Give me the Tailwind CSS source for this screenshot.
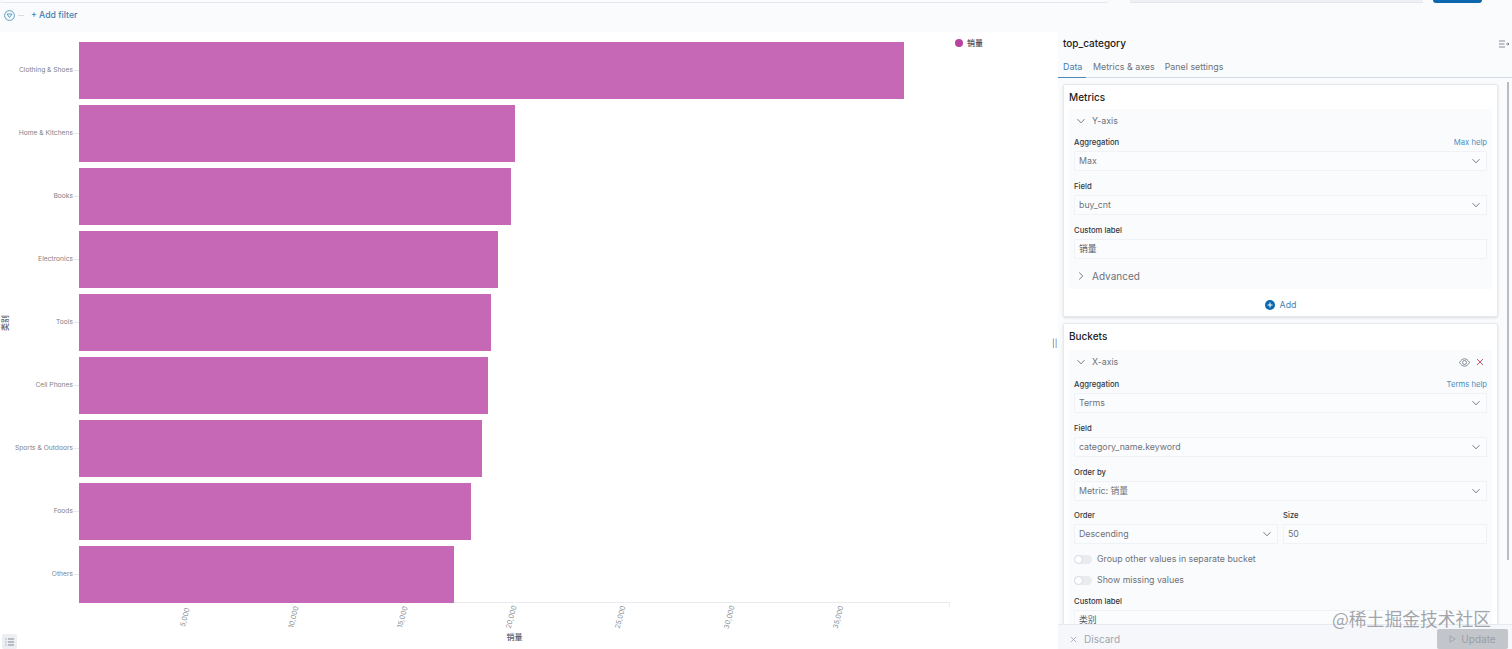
<!DOCTYPE html>
<html lang="en">
<head>
  <meta charset="UTF-8" />
  <title>top_category</title>
  <script src="https://cdn.jsdelivr.net/npm/@tailwindcss/browser@4"></script>
</head>
<body class="bg-white text-[#343741] font-['Inter','Noto_Sans_CJK_SC',sans-serif]">
<div class="relative w-[1512px] h-[649px] overflow-hidden flex flex-col">

  <!-- query bar -->
  <header class="h-[32px] shrink-0 bg-[#fafbfd]">
    <div class="flex h-[3px]">
      <div class="w-[1108px] border-b border-[#e3e6ec] rounded-b-sm"></div>
      <div class="w-[22px]"></div>
      <div class="w-[293px] bg-[#eef0f4] border-b border-[#e3e6ec]"></div>
      <div class="w-[10px]"></div>
      <div class="w-[49px] bg-[#0b68ae] rounded-b-sm"></div>
    </div>
    <div class="flex items-center h-[24px] pl-[4px]">
      <svg class="w-[11px] h-[11px]" viewBox="0 0 11 11" fill="none" stroke="#4d93bf" stroke-width="0.9"><circle cx="5.5" cy="5.5" r="4.9"/><path d="M3 4h5L5.5 7.6z"/></svg>
      <div class="w-[6px] h-px bg-[#d8dce3] ml-[3px]"></div>
      <span class="ml-[7px] mt-[1px] text-[8.7px] font-medium text-[#3f7fae]">+ Add filter</span>
    </div>
  </header>

  <div class="flex flex-1 min-h-0">
    <!-- chart -->
    <main class="w-[1053px] shrink-0 flex">
      <div class="w-[950px] shrink-0 pt-[10px]">
        <div class="flex">
          <div class="w-[10px] flex items-center justify-center">
            <div class="w-0 flex justify-center"><span class="-rotate-90 whitespace-nowrap text-[8px] font-medium text-[#5f6470]">类别</span></div>
          </div>
          <div class="flex-1 flex flex-col gap-[6px] text-[6.7px] text-[#808388]">
            <div class="h-[57px] flex items-center"><span class="w-[63px] text-right whitespace-nowrap">Clothing &amp; Shoes</span><i class="ml-[1px] w-[5px] h-px bg-[#e6e8ec]"></i><div class="h-full bg-[#c768b7]" style="width:825px"></div></div>
            <div class="h-[57px] flex items-center"><span class="w-[63px] text-right whitespace-nowrap">Home &amp; Kitchens</span><i class="ml-[1px] w-[5px] h-px bg-[#e6e8ec]"></i><div class="h-full bg-[#c768b7]" style="width:436px"></div></div>
            <div class="h-[57px] flex items-center"><span class="w-[63px] text-right whitespace-nowrap">Books</span><i class="ml-[1px] w-[5px] h-px bg-[#e6e8ec]"></i><div class="h-full bg-[#c768b7]" style="width:432px"></div></div>
            <div class="h-[57px] flex items-center"><span class="w-[63px] text-right whitespace-nowrap">Electronics</span><i class="ml-[1px] w-[5px] h-px bg-[#e6e8ec]"></i><div class="h-full bg-[#c768b7]" style="width:419px"></div></div>
            <div class="h-[57px] flex items-center"><span class="w-[63px] text-right whitespace-nowrap">Tools</span><i class="ml-[1px] w-[5px] h-px bg-[#e6e8ec]"></i><div class="h-full bg-[#c768b7]" style="width:412px"></div></div>
            <div class="h-[57px] flex items-center"><span class="w-[63px] text-right whitespace-nowrap">Cell Phones</span><i class="ml-[1px] w-[5px] h-px bg-[#e6e8ec]"></i><div class="h-full bg-[#c768b7]" style="width:409px"></div></div>
            <div class="h-[57px] flex items-center"><span class="w-[63px] text-right whitespace-nowrap">Sports &amp; Outdoors</span><i class="ml-[1px] w-[5px] h-px bg-[#e6e8ec]"></i><div class="h-full bg-[#c768b7]" style="width:403px"></div></div>
            <div class="h-[57px] flex items-center"><span class="w-[63px] text-right whitespace-nowrap">Foods</span><i class="ml-[1px] w-[5px] h-px bg-[#e6e8ec]"></i><div class="h-full bg-[#c768b7]" style="width:392px"></div></div>
            <div class="h-[57px] flex items-center"><span class="w-[63px] text-right whitespace-nowrap">Others</span><i class="ml-[1px] w-[5px] h-px bg-[#e6e8ec]"></i><div class="h-full bg-[#c768b7]" style="width:375px"></div></div>
          </div>
        </div>
        <!-- x axis -->
        <div class="ml-[79px] w-[871px] h-[28px] -mt-px border-t border-[#e9ebef] flex text-[7px] text-[#8b9098]">
          <div class="flex-1 flex justify-end"><div class="w-0 mr-[2px] flex justify-center pt-[9px]"><span class="h-fit rotate-[-75deg] whitespace-nowrap">5,000</span></div></div>
          <div class="flex-1 flex justify-end"><div class="w-0 mr-[2px] flex justify-center pt-[9px]"><span class="h-fit rotate-[-75deg] whitespace-nowrap">10,000</span></div></div>
          <div class="flex-1 flex justify-end"><div class="w-0 mr-[2px] flex justify-center pt-[9px]"><span class="h-fit rotate-[-75deg] whitespace-nowrap">15,000</span></div></div>
          <div class="flex-1 flex justify-end"><div class="w-0 mr-[2px] flex justify-center pt-[9px]"><span class="h-fit rotate-[-75deg] whitespace-nowrap">20,000</span></div></div>
          <div class="flex-1 flex justify-end"><div class="w-0 mr-[2px] flex justify-center pt-[9px]"><span class="h-fit rotate-[-75deg] whitespace-nowrap">25,000</span></div></div>
          <div class="flex-1 flex justify-end"><div class="w-0 mr-[2px] flex justify-center pt-[9px]"><span class="h-fit rotate-[-75deg] whitespace-nowrap">30,000</span></div></div>
          <div class="flex-1 flex justify-end"><div class="w-0 mr-[2px] flex justify-center pt-[9px]"><span class="h-fit rotate-[-75deg] whitespace-nowrap">35,000</span></div></div>
          <div class="flex-1 border-r border-[#e9ebef] h-[4px]"></div>
        </div>
        <div class="ml-[79px] w-[871px] text-center text-[8px] font-medium leading-[10px] mt-[2px] text-[#5f6470]">销量</div>
      </div>
      <!-- legend -->
      <div class="pl-[5px] pt-[5px]">
        <div class="flex items-center gap-[4px] text-[8px] font-medium text-[#4a4e58]"><i class="w-[8px] h-[8px] rounded-full bg-[#b8439f]"></i>销量</div>
      </div>
    </main>

    <!-- resize handle -->
    <div class="w-[5px] shrink-0 flex items-center text-[8px] text-[#5f6470] pt-[4px]"><span class="-ml-[1px]">||</span></div>

    <!-- editor -->
    <aside class="flex-1 min-w-0 bg-[#fafbfd] flex flex-col">
      <div class="pl-[5px] pr-[3px] flex items-center justify-between h-[23px] text-[10px] font-medium text-[#1a1c21]">
        <span>top_category</span>
        <svg class="w-[10px] h-[8px]" viewBox="0 0 10 8" fill="none" stroke="#69707d" stroke-width="0.8"><path d="M0 1h6M0 4h5.5M0 7h6M7 4h3M8.6 2.6 10 4 8.6 5.4"/></svg>
      </div>
      <div class="flex h-[23px] border-b border-[#d3dae6] text-[8.9px] text-[#6f7278]">
        <div class="w-[28px] h-[23px] pl-[5px] pt-[5px] border-b border-[#4f8cb3] text-[#3f7fae]">Data</div>
        <div class="ml-[7px] pt-[5px]">Metrics &amp; axes</div>
        <div class="ml-[10px] pt-[5px]">Panel settings</div>
      </div>

      <div class="flex-1 min-h-0 overflow-hidden relative pl-[5px] pr-[14px] pt-[6px] flex flex-col gap-[6px]">
        <!-- metrics card -->
        <section class="shrink-0 h-[233px] bg-white border border-[#e6e9ef] rounded-[2px] shadow-sm px-[5px]">
          <h2 class="text-[10px] font-medium text-[#1a1c21] leading-[12px] pt-[6px]">Metrics</h2>
          <div class="h-[23px] mt-[6px] bg-[#fafbfd] flex items-center pl-[8px] text-[8.8px] text-[#6f7278]">
            <svg class="w-[8px] h-[8px]" viewBox="0 0 8 8" fill="none" stroke="#535966" stroke-width="0.8"><path d="M.5 2.2 4 5.8l3.5-3.6"/></svg>
            <span class="ml-[7px]">Y-axis</span>
          </div>
          <div class="bg-[#fafbfd] px-[5px] pt-[3px]">
            <div class="flex justify-between h-[16px] items-center text-[7.7px] font-medium"><span>Aggregation</span><span class="font-normal text-[#4a8fbe]">Max help</span></div>
            <div class="h-[20px] mb-[8px] bg-[#fbfcfd] border border-[#f0f2f5] flex items-center justify-between pl-[4px] pr-[6px] text-[8.8px] text-[#6f7278]"><span>Max</span><svg class="w-[8px] h-[8px]" viewBox="0 0 8 8" fill="none" stroke="#535966" stroke-width="0.8"><path d="M.5 2.2 4 5.8l3.5-3.6"/></svg></div>
            <div class="h-[16px] flex items-center text-[7.7px] font-medium">Field</div>
            <div class="h-[20px] mb-[8px] bg-[#fbfcfd] border border-[#f0f2f5] flex items-center justify-between pl-[4px] pr-[6px] text-[8.8px] text-[#6f7278]"><span>buy_cnt</span><svg class="w-[8px] h-[8px]" viewBox="0 0 8 8" fill="none" stroke="#535966" stroke-width="0.8"><path d="M.5 2.2 4 5.8l3.5-3.6"/></svg></div>
            <div class="h-[16px] flex items-center text-[7.7px] font-medium">Custom label</div>
            <div class="h-[20px] bg-[#fbfcfd] border border-[#f0f2f5] flex items-center px-[4px] text-[8.8px] text-[#535966]">销量</div>
          </div>
          <div class="h-[30px] pt-[4px] bg-[#fafbfd] flex items-center pl-[8px] text-[10px] text-[#6f7278]">
            <svg class="w-[8px] h-[8px]" viewBox="0 0 8 8" fill="none" stroke="#535966" stroke-width="0.8"><path d="M2.2.5 5.8 4 2.2 7.5"/></svg>
            <span class="ml-[7px]">Advanced</span>
          </div>
          <div class="flex items-center justify-center h-[19px] mt-[6px] gap-[5px] text-[8.8px] text-[#4a7fb5]">
            <svg class="w-[10px] h-[10px]" viewBox="0 0 10 10"><circle cx="5" cy="5" r="5" fill="#0b68ae"/><path d="M5 2.5v5M2.5 5h5" stroke="#fff" stroke-width="1"/></svg>
            <span>Add</span>
          </div>
        </section>

        <!-- buckets card -->
        <section class="shrink-0 bg-white border border-[#e6e9ef] rounded-[2px] shadow-sm px-[5px]">
          <h2 class="text-[10px] font-medium text-[#1a1c21] leading-[12px] pt-[6px]">Buckets</h2>
          <div class="h-[24px] mt-[8px] bg-[#fafbfd] flex items-center pl-[8px] pr-[8px] text-[8.8px] text-[#6f7278]">
            <svg class="w-[8px] h-[8px]" viewBox="0 0 8 8" fill="none" stroke="#535966" stroke-width="0.8"><path d="M.5 2.2 4 5.8l3.5-3.6"/></svg>
            <span class="ml-[7px]">X-axis</span>
            <svg class="ml-auto w-[11px] h-[9px]" viewBox="0 0 11 9" fill="none" stroke="#69707d" stroke-width="0.8"><path d="M.5 4.5C2 2 3.6.8 5.5.8S9 2 10.5 4.5C9 7 7.4 8.2 5.5 8.2S2 7 .5 4.5z"/><circle cx="5.5" cy="4.5" r="2"/></svg>
            <svg class="ml-[6px] w-[8px] h-[8px]" viewBox="0 0 8 8" fill="none" stroke="#c9415f" stroke-width="0.9"><path d="M1 1l6 6M7 1 1 7"/></svg>
          </div>
          <div class="bg-[#fafbfd] px-[5px] pt-[3px] pb-[10px]">
            <div class="flex justify-between h-[16px] items-center text-[7.7px] font-medium"><span>Aggregation</span><span class="font-normal text-[#4a8fbe]">Terms help</span></div>
            <div class="h-[20px] mb-[8px] bg-[#fbfcfd] border border-[#f0f2f5] flex items-center justify-between pl-[4px] pr-[6px] text-[8.8px] text-[#6f7278]"><span>Terms</span><svg class="w-[8px] h-[8px]" viewBox="0 0 8 8" fill="none" stroke="#535966" stroke-width="0.8"><path d="M.5 2.2 4 5.8l3.5-3.6"/></svg></div>
            <div class="h-[16px] flex items-center text-[7.7px] font-medium">Field</div>
            <div class="h-[20px] mb-[8px] bg-[#fbfcfd] border border-[#f0f2f5] flex items-center justify-between pl-[4px] pr-[6px] text-[8.8px] text-[#6f7278]"><span>category_name.keyword</span><svg class="w-[8px] h-[8px]" viewBox="0 0 8 8" fill="none" stroke="#535966" stroke-width="0.8"><path d="M.5 2.2 4 5.8l3.5-3.6"/></svg></div>
            <div class="h-[16px] flex items-center text-[7.7px] font-medium">Order by</div>
            <div class="h-[20px] mb-[7px] bg-[#fbfcfd] border border-[#f0f2f5] flex items-center justify-between pl-[4px] pr-[6px] text-[8.8px] text-[#6f7278]"><span>Metric: 销量</span><svg class="w-[8px] h-[8px]" viewBox="0 0 8 8" fill="none" stroke="#535966" stroke-width="0.8"><path d="M.5 2.2 4 5.8l3.5-3.6"/></svg></div>
            <div class="flex gap-[5px] mb-[4px]">
              <div class="w-[204px]">
                <div class="h-[16px] flex items-center text-[7.7px] font-medium">Order</div>
                <div class="h-[20px] bg-[#fbfcfd] border border-[#f0f2f5] flex items-center justify-between pl-[4px] pr-[6px] text-[8.8px] text-[#6f7278]"><span>Descending</span><svg class="w-[8px] h-[8px]" viewBox="0 0 8 8" fill="none" stroke="#535966" stroke-width="0.8"><path d="M.5 2.2 4 5.8l3.5-3.6"/></svg></div>
              </div>
              <div class="flex-1">
                <div class="h-[16px] flex items-center text-[7.7px] font-medium">Size</div>
                <div class="h-[20px] bg-[#fbfcfd] border border-[#f0f2f5] flex items-center px-[4px] text-[8.8px] text-[#6f7278]">50</div>
              </div>
            </div>
            <div class="flex items-center h-[22px] gap-[5px] text-[8.8px] text-[#6f7278]">
              <div class="w-[18px] h-[9px] rounded-full bg-[#e9ebef] flex items-center"><i class="w-[9px] h-[9px] rounded-full bg-white border border-[#d3dae6]"></i></div>
              <span>Group other values in separate bucket</span>
            </div>
            <div class="flex items-center h-[20px] gap-[5px] text-[8.8px] text-[#6f7278]">
              <div class="w-[18px] h-[9px] rounded-full bg-[#e9ebef] flex items-center"><i class="w-[9px] h-[9px] rounded-full bg-white border border-[#d3dae6]"></i></div>
              <span>Show missing values</span>
            </div>
            <div class="h-[16px] mt-[4px] flex items-center text-[7.7px] font-medium">Custom label</div>
            <div class="h-[20px] bg-[#fbfcfd] border border-[#f0f2f5] flex items-center px-[4px] text-[8.8px] text-[#535966]">类别</div>
          </div>
        </section>
        <!-- scrollbar thumb -->
        <div class="absolute right-[3px] top-[4px] w-[2px] h-[478px] bg-[#b9bcc2]"></div>
      </div>

      <!-- action bar -->
      <div class="relative h-[25px] shrink-0 bg-[#f5f7fa] border-t border-[#e6e9ef] flex items-center justify-between pl-[12px] pr-[4px] text-[10px]">
        <div class="flex items-center gap-[7px] mt-[4px] text-[#a0a5ae]">
          <svg class="w-[7px] h-[7px]" viewBox="0 0 8 8" fill="none" stroke="#a0a5ae" stroke-width="0.9"><path d="M1 1l6 6M7 1 1 7"/></svg>
          <span>Discard</span>
        </div>
        <div class="w-[71px] h-[20px] mt-[3px] pt-[1px] bg-[#c2c5ca] rounded-[2px] flex items-center justify-center gap-[5px] text-[#9a9ea6]">
          <svg class="w-[7px] h-[8px]" viewBox="0 0 7 8" fill="none" stroke="#9a9ea6" stroke-width="0.8"><path d="M1 .8 6.2 4 1 7.2z"/></svg>
          <span>Update</span>
        </div>
      </div>
    </aside>
  </div>

  <!-- legend toggle -->
  <div class="absolute left-[2px] bottom-0 w-[15px] h-[15px] bg-[#eceef2] rounded-[2px] flex items-center justify-center">
    <svg class="w-[9px] h-[8px]" viewBox="0 0 9 8" fill="none" stroke="#69707d" stroke-width="0.8"><path d="M3 1h6M3 4h6M3 7h6M.5 1h1M.5 4h1M.5 7h1"/></svg>
  </div>

  <!-- watermark -->
  <div class="absolute left-[1332px] top-[607px] text-[17.8px] leading-[22px] text-[#8a8d94]/80 whitespace-nowrap font-['Noto_Sans_CJK_SC',sans-serif]">@稀土掘金技术社区</div>
</div>
</body>
</html>
